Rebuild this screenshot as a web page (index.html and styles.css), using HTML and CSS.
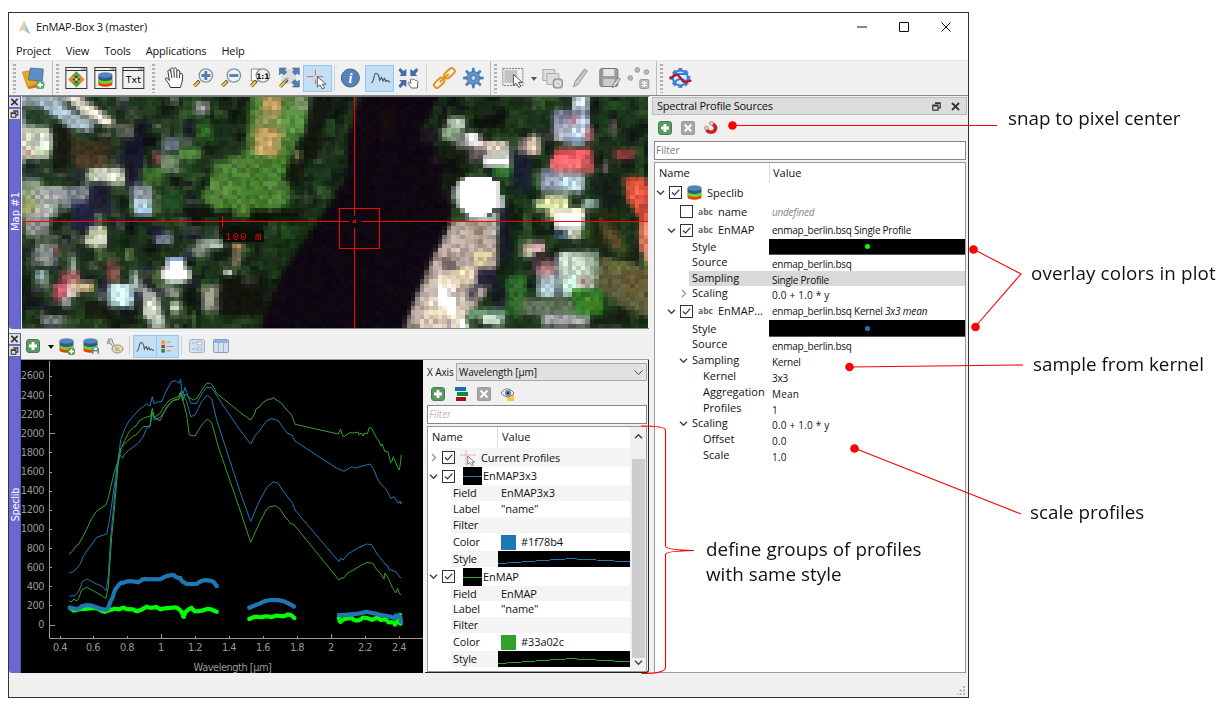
FILE: index.html
```html
<!DOCTYPE html>
<html lang="en">
<head>
<meta charset="utf-8">
<title>EnMAP-Box 3 (master)</title>
<link rel="stylesheet" href="styles.css">
</head>
<body>
<svg class="defs" width="0" height="0">
  <defs><linearGradient id="prism" x1="0" x2="1"><stop offset="0" stop-color="#e77"/><stop offset=".35" stop-color="#f5c95c"/><stop offset=".6" stop-color="#7cc7e8"/><stop offset="1" stop-color="#8266c8"/></linearGradient></defs>
  <symbol id="plus" viewBox="0 0 14 14"><rect x=".5" y=".5" width="13" height="13" rx="2.500" fill="#5c9861" stroke="#468049"/><path d="M7 3v8M3 7h8" stroke="#fff" stroke-width="2.800"/></symbol>
  <symbol id="cross" viewBox="0 0 14 14"><rect x=".5" y=".5" width="13" height="13" rx="1" fill="#a6a6a6" stroke="#999"/><path d="M3.500 3.500l7 7M10.500 3.500l-7 7" stroke="#fff" stroke-width="2"/></symbol>
  <symbol id="check" viewBox="0 0 13 13"><rect x=".5" y=".5" width="12" height="12" fill="#fff" stroke="#333"/><path d="M3 6.500l2.500 2.500 4.800-5.300" fill="none" stroke="#333" stroke-width="1.200"/></symbol>
  <symbol id="box" viewBox="0 0 13 13"><rect x=".5" y=".5" width="12" height="12" fill="#fff" stroke="#333"/></symbol>
  <symbol id="down" viewBox="0 0 9 9"><path d="M1 2.800l3.500 3.500L8 2.800" fill="none" stroke="#444" stroke-width="1.500"/></symbol>
  <symbol id="right" viewBox="0 0 9 9"><path d="M3 1l3.500 3.500L3 8" fill="none" stroke="#999" stroke-width="1.400"/></symbol>
  <symbol id="db" viewBox="0 0 15 15"><path d="M.5 8v4c0 3.600 14 3.600 14 0V8z" fill="#f23b0c"/><path d="M.5 6v3.500c0 3.300 14 3.300 14 0V6z" fill="#6ed41c"/><path d="M.5 3v3.500c0 3.300 14 3.300 14 0V3z" fill="#2e5b8e"/><ellipse cx="7.500" cy="3" rx="7" ry="2.700" fill="#5585bc"/></symbol>
  <symbol id="curve" viewBox="0 0 24 24"><path d="M2.500 17.500c3 0 2.500-10 4.800-10s2 1.500 3 2.500l1 5 2-3 1.500 3.500 1.500-2.500 1.500 3 1.500-1 3 2" fill="none" stroke="#4c5255" stroke-width="1.200"/></symbol>
  <symbol id="arrow" viewBox="0 0 12 15"><path d="M1 1v11l2.700-2.300L6.500 14l2-1.200L6.200 9h4z" fill="#fff" stroke="#555"/></symbol>
  <symbol id="floatwin" viewBox="0 0 9 9"><path d="M3 .8h5.200v5H6M.8 3h5.200v5.200H.8zM.8 4h5M3 1.500h5" fill="none" stroke="#333" stroke-width="1.200"/></symbol>
  <symbol id="close" viewBox="0 0 9 9"><path d="M1 1l7 7M8 1L1 8" stroke="#333" stroke-width="1.800"/></symbol>
  <symbol id="lens" viewBox="0 0 24 24"><path d="M3 20l5-5" stroke="#333" stroke-width="3.500"/><path d="M2.500 20.500l5-5" stroke="#f5c938" stroke-width="2.300"/><circle cx="14.500" cy="9.500" r="6.700" fill="#edf1f2" stroke="#8b9193" stroke-width="1.300"/></symbol>
  <symbol id="winframe" viewBox="0 0 24 24"><rect x="1.500" y="1.500" width="21" height="21" fill="#f1f1ef" stroke="#333"/><path d="M1.500 4.500h21M17 3h1m1 0h2" stroke="#333"/></symbol>
</svg>

<div class="window">
  <header class="titlebar">
    <svg class="logo" viewBox="0 0 14 16"><path d="M6 1L1 13c2-2 4-3 6-1l5 3z" fill="url(#prism)" opacity=".75"/></svg>
    <span>EnMAP-Box 3 (master)</span>
    <svg class="sysbuttons" viewBox="0 0 100 12"><path d="M0 6h10M42.500 1.500h9v9h-9zM84.500 1.500l9 9M93.500 1.500l-9 9" fill="none" stroke="#111"/></svg>
  </header>
  <nav class="menubar"><span>Project</span><span>View</span><span>Tools</span><span>Applications</span><span>Help</span></nav>

  <div class="toolbar">
    <div class="group g1"><i class="grip"></i>
      <svg viewBox="0 0 24 24"><path d="M4 15l13-3 2 9-12 2z" fill="#d9682c"/><path d="M1 6l11-2 4 14-10 3z" fill="#e8a91d" stroke="#c98616" stroke-width=".7"/><path d="M9 2l13 1-1 12-14-1z" fill="#5e8ec4" stroke="#41658d" stroke-width=".7"/><rect x="14.500" y="15" width="8.500" height="8" rx="2.500" fill="#69a66c"/><path d="M18.800 16.500v5M16.300 19h5" stroke="#fff" stroke-width="1.800"/></svg>
    </div>
    <div class="group g2"><i class="grip"></i>
      <svg viewBox="0 0 24 24"><use href="#winframe"/><path d="M12 5.500l8 8-8 8-8-8z" fill="#53a33b"/><path d="M12 5.500l4 4-4 4-4 4-4-4zM12 13.500l4 4 4-4-4-4z" fill="#e58b35"/><path d="M12 5.500l4 4-4 4-4-4z" fill="#53a33b"/><path d="M12 10v7M8.500 13.500h7" stroke="#24402a" stroke-width="1.500"/><circle cx="12" cy="13.500" r="1.300" fill="#eee"/></svg>
      <svg viewBox="0 0 24 24"><use href="#winframe"/><use href="#db" x="4" y="6" width="16" height="15"/></svg>
      <svg viewBox="0 0 24 24"><use href="#winframe"/><text x="12" y="17" text-anchor="middle" class="txt">Txt</text></svg>
    </div>
    <div class="group g3"><i class="grip"></i>
      <svg viewBox="0 0 24 24"><path d="M8 21.500c-1-4-4-6-5-9 1-1.500 3 0 4 2L5.500 5c1-2 2.500-1 3 1l-.3-3c1-2 2.800-1 3.300.500V3c1-2 2.800-1 3 1v1c1-1.500 3-1 3 1v2c1-1 2.700-.5 2.700 1 .5 6-1.200 9-2.200 12.500z" fill="#fff" stroke="#333"/><path d="M8.500 6l1 6M11.500 4l.5 7.500M14.500 5v7M17.500 8l-.5 4" stroke="#333"/></svg>
      <svg viewBox="0 0 24 24"><use href="#lens"/><path d="M14.500 5v9M10 9.500h9" stroke="#4c7db5" stroke-width="2.800"/></svg>
      <svg viewBox="0 0 24 24"><use href="#lens"/><path d="M10 9.500h9" stroke="#4c7db5" stroke-width="2.800"/></svg>
      <svg viewBox="0 0 24 24"><path d="M3 3h10v12H3z" fill="#fff" stroke="#888"/><use href="#lens"/><text x="14.500" y="12.500" text-anchor="middle" class="one">1:1</text></svg>
      <svg viewBox="0 0 24 24"><path d="M4 3h15v15H4z" fill="#ddd"/><path d="M2 2h7L7.200 3.800l2.300 2.300-2.900 2.900-2.300-2.300L2 9zM22 2v7l-2-2-2 2-3-3 2-2-2-2zM22 21h-7l2-2-2.500-2.500 3-3L20 16l2-2z" fill="#5080b4" stroke="#315b87" stroke-width=".5"/><path d="M3 20.500l7-7" stroke="#333" stroke-width="3.200"/><path d="M2.500 21l5-5" stroke="#f5c938" stroke-width="2.300"/><path d="M7 16l4-4" stroke="#aaa" stroke-width="2"/></svg>
      <svg class="on" viewBox="0 0 28 26"><path d="M12 4v6M12 14v5M3 11h7M14 11h6" stroke="#e35b60"/><use href="#arrow" x="13" y="10" width="12" height="15"/></svg>
      <i class="line"></i>
      <svg viewBox="0 0 24 24"><circle cx="12" cy="12" r="9" fill="#5582b8" stroke="#3c638e"/><text x="12" y="17" text-anchor="middle" class="info">i</text></svg>
      <svg class="on" viewBox="0 0 28 26"><use href="#curve" x="3" y="0" width="24" height="24"/></svg>
      <svg viewBox="0 0 24 24"><path d="M2 4l2-2 3 3 3-2v7H3l2-2zM22 4l-2-2-3 3-3-2v7h7l-2-2zM2 20l2 2 3-3 3 2v-7H3l2 2z" fill="#436e9f"/><path d="M15 22l-3.500-5c1-1.500 2-.5 3 .500l-.5-4c1-1.500 2 0 2.500.5 1-1 2-.5 2.500.5 1.500-.5 2.500.5 2.500 2L21 22z" fill="#fff" stroke="#555" stroke-width=".9"/></svg>
      <i class="line wide"></i>
      <svg viewBox="0 0 24 24"><g transform="rotate(-43 12 12)" fill="none" stroke="#e3931d" stroke-width="2"><rect x="-1" y="9" width="12" height="6" rx="3"/><rect x="13" y="9" width="12" height="6" rx="3"/><path d="M6 12h12"/></g></svg>
      <svg viewBox="0 0 24 24"><g stroke="#4f81b7" stroke-width="3" stroke-linecap="round"><path d="M12 3v18M3 12h18M5.500 5.500l13 13M5.500 18.500l13-13"/></g><circle cx="12" cy="12" r="6.500" fill="#6492c5" stroke="#4677ad"/><circle cx="12" cy="12" r="2.500" fill="#bdd4ee" stroke="#4677ad"/></svg>
    </div>
    <div class="group g4"><i class="grip"></i>
      <svg viewBox="0 0 24 24"><rect x="1.500" y="2.500" width="20" height="17" fill="none" stroke="#777" stroke-dasharray="2 1"/><path d="M3 4h13v13H3z" fill="#c3c3c3"/><use href="#arrow" x="11" y="7" width="12" height="16"/></svg>
      <b class="tri"></b>
      <svg viewBox="0 0 24 24"><path d="M2.500 3.500h12v11h-12z" fill="#ddd" stroke="#aaa"/><path d="M6.500 7.500h12v11h-12z" fill="#ddd" stroke="#aaa"/><rect x="13" y="13" width="9" height="9" rx="2" fill="#bbb" stroke="#888"/><circle cx="17.500" cy="17.500" r="2.700" fill="none" stroke="#fff"/><path d="M15.500 19.500l4-4" stroke="#fff"/></svg>
      <svg viewBox="0 0 24 24"><path d="M5 21l2-6L16 3l3 2-9 13z" fill="#cfcfcf" stroke="#999"/><path d="M8 15l9-11" stroke="#aaa"/></svg>
      <svg viewBox="0 0 24 24"><rect x="2.500" y="2.500" width="18" height="18" rx="2" fill="#9d9d9d" stroke="#777"/><path d="M6 3h11v7H6z" fill="#e5e5e5"/><path d="M6 13h11v7H6z" fill="#ccc"/><path d="M15 22l1-4 5-6 2 1-5 7z" fill="#ddd" stroke="#888"/></svg>
      <svg viewBox="0 0 24 24"><g fill="#b9b9b9" stroke="#999"><circle cx="4" cy="12" r="2.300"/><circle cx="11" cy="4" r="2.300"/><circle cx="20" cy="6" r="2.300"/><rect x="13.500" y="13.500" width="9" height="9" rx="1.500"/></g><path d="M18 15v6M15.500 16.500l5 3M20.500 16.500l-5 3" stroke="#fff" stroke-width="1.300"/></svg>
    </div>
    <div class="group g5"><i class="grip"></i>
      <svg viewBox="0 0 24 24"><g stroke="#758089" stroke-width="4"><path d="M12 2v20M2 12h20M5 5l14 14M5 19L19 5"/></g><circle cx="12" cy="12" r="7.500" fill="#dbe9fb" stroke="#2780ed" stroke-width="2"/><path d="M6 17c3-5 8-5 12-1M6 8h12" fill="none" stroke="#2780ed" stroke-width="2"/><path d="M1 12c5 0 5-4 8-3s4 6 7 7 3-2 7-1" fill="none" stroke="#c0141c" stroke-width="2.300"/></svg>
    </div>
  </div>

  <main class="workspace">
    <div class="docks">
      <section class="dock mapdock">
        <div class="tab"><svg><use href="#close"/></svg><svg><use href="#floatwin"/></svg><span class="vlabel">Map #1</span></div>
        <div class="map">
          <canvas id="raster" width="140" height="52"></canvas>
          <svg class="over" viewBox="22 97 626 231"><rect x="223" y="230" width="41" height="12" fill="#071006"/><path d="M22 221.500h327M361 221.500h287M354.500 97v118.500M354.500 228v100M222.500 216v11M339.500 208.500h40v40h-40zM353.500 220.500h2v2h-2z" class="cross"/><text x="225" y="239.500" class="scale">100 m</text></svg>
        </div>
      </section>
      <section class="dock libdock">
        <div class="tab"><svg><use href="#close"/></svg><svg><use href="#floatwin"/></svg><span class="vlabel lib">Speclib</span></div>
        <div class="libmain">
          <div class="libbar">
            <svg class="i14"><use href="#plus"/></svg><b class="tri black"></b>
            <svg viewBox="0 0 18 18"><use href="#db" width="15" height="15" x="1" y="1"/><rect x="10" y="11" width="7" height="7" rx="2" fill="#5c9861"/><path d="M13.500 12v5M11 14.500h5" stroke="#fff" stroke-width="1.500"/></svg>
            <svg viewBox="0 0 18 18"><use href="#db" width="15" height="15" x="1" y="1"/><path d="M10 11h7v6h-7z" fill="#6e86a8"/><path d="M12 11h3v2h-3zM11.500 14.500h4V17h-4z" fill="#eee"/></svg>
            <svg class="wrench" viewBox="0 0 18 18"><path d="M2 2l4 0 1 4 6 6-2 3-6-8-4-1 1-2 2 1z" fill="#ddd" stroke="#777" stroke-width=".8"/><ellipse cx="11.500" cy="12" rx="5.500" ry="4" fill="#ddd" stroke="#888"/><circle cx="11" cy="12" r="2" fill="#8aa4c0"/><path d="M8 8l7 7.500" stroke="#e8c14c" stroke-width="2"/></svg>
            <i class="line"></i>
            <div class="pair"><svg viewBox="0 0 24 24"><use href="#curve"/></svg><svg viewBox="0 0 24 24"><path d="M5 5h4v4H5z" fill="#e6a400"/><path d="M5 10h4v4H5z" fill="#d82b20"/><path d="M5 15h4v4H5z" fill="#12933d"/><path d="M11 7h4M11 12h8M11 17h5" stroke="#d47b45"/></svg></div>
            <i class="line"></i>
            <svg class="form" viewBox="0 0 16 16"><rect x=".5" y="1.500" width="15" height="13" rx="2" fill="#d5e0ec" stroke="#9db4ce"/><path d="M3 5h3M3 11h3M8 4h5v3H8zM8 10h5v2H8z" fill="#fff" stroke="#9db4ce"/></svg>
            <svg class="form" viewBox="0 0 16 16"><rect x=".5" y="1.500" width="15" height="13" rx="1" fill="#d5e0ec" stroke="#7ea3cb"/><path d="M1 2h14v3H1z" fill="#8fb5de"/><path d="M5.500 5v9M10.500 5v9" stroke="#9db4ce"/></svg>
          </div>
          <div class="libbody">
            <svg class="plot" viewBox="21 360 402 313">
              <path d="M49.500 361v277.500H423" fill="none" stroke="#999"/>
              <g id="ticks" class="ticks"></g>
              <text x="232.500" y="671" text-anchor="middle" class="axis">Wavelength [µm]</text>
              <g id="profiles" class="profiles"></g>
              <g id="dots" class="dots" transform="translate(0 510) scale(.33333)"></g>
            </svg>
            <aside class="panel">
              <div class="xaxis"><label>X Axis</label><div class="select"><span>Wavelength [µm]</span><svg viewBox="0 0 9 9"><path d="M.5 2.500l4 4 4-4" fill="none" stroke="#444"/></svg></div></div>
              <div class="ptools"><svg class="i14"><use href="#plus"/></svg><svg class="i14" viewBox="0 0 14 14"><path d="M1 0h11v4H1z" fill="#1671b8"/><path d="M3 5h11v4H3z" fill="#0a8a43"/><path d="M2 10h10v4H2z" fill="#a51212"/></svg><svg class="i14"><use href="#cross"/></svg><svg class="eye" viewBox="0 0 16 14"><path d="M7 7h7v7H7z" fill="#f5cb3d"/><path d="M1 6c4-6 9-5 13 0-4 5-9 5-13 0z" fill="#eee" stroke="#777"/><circle cx="8" cy="6" r="3" fill="#5484b5"/><circle cx="8" cy="6" r="1" fill="#123"/></svg></div>
              <div class="filter ghost">Filter</div>
              <div class="ptree">
                <div class="prows">
                  <div class="phead"><span>Name</span><span>Value</span></div>
                  <div class="prow top h19 grey"><svg class="chev"><use href="#right"/></svg><svg class="cb"><use href="#check"/></svg><svg class="cursor" viewBox="0 0 18 18"><path d="M7 1v16M1 6h16" stroke="#eeb0ad"/><use href="#arrow" x="8" y="6" width="9" height="12"/></svg><span>Current Profiles</span></div>
                  <div class="prow top"><svg class="chev"><use href="#down"/></svg><svg class="cb"><use href="#check"/></svg><i class="sample blue"></i><span>EnMAP3x3</span></div>
                  <div class="prow sub h16 grey"><span>Field</span><span>EnMAP3x3</span></div>
                  <div class="prow sub h16"><span>Label</span><span>"name"</span></div>
                  <div class="prow sub h16 grey"><span>Filter</span></div>
                  <div class="prow sub"><span>Color</span><span class="color"><i class="sw blue"></i>#1f78b4</span></div>
                  <div class="prow sub h16 grey style"><span>Style</span><svg viewBox="0 0 132 16"><path d="M0 12.500h8l2-1h13l1-1h13l1-1h13l2-1h14l1-1h10l2 1h18l1 1h17l1 1h15" fill="none" stroke="#1f78b4"/></svg></div>
                  <div class="prow top h19"><svg class="chev"><use href="#down"/></svg><svg class="cb"><use href="#check"/></svg><i class="sample green"></i><span>EnMAP</span></div>
                  <div class="prow sub h15 grey"><span>Field</span><span>EnMAP</span></div>
                  <div class="prow sub h16"><span>Label</span><span>"name"</span></div>
                  <div class="prow sub h16 grey"><span>Filter</span></div>
                  <div class="prow sub"><span>Color</span><span class="color"><i class="sw green"></i>#33a02c</span></div>
                  <div class="prow sub h16 grey style"><span>Style</span><svg viewBox="0 0 132 16"><path d="M0 12.500h8l2-1h13l1-1h13l1-1h13l2-1h14l1-1h10l2 1h18l1 1h17l1 1h15" fill="none" stroke="#33a02c"/></svg></div>
                </div>
                <div class="scroll"><svg viewBox="0 0 9 9"><path d="M1 6.300l3.500-3.500L8 6.300" fill="none" stroke="#444" stroke-width="1.500"/></svg><i></i><svg><use href="#down"/></svg></div>
              </div>
            </aside>
          </div>
        </div>
      </section>
    </div>

    <section class="sources">
      <div class="srchead"><span>Spectral Profile Sources</span><svg><use href="#floatwin"/></svg><svg><use href="#close"/></svg></div>
      <div class="srctools"><svg class="i14"><use href="#plus"/></svg><svg class="i14"><use href="#cross"/></svg><svg class="i14" viewBox="0 0 14 14"><path d="M2.500 7.500c1 5 8 5 9 0C12 5 10 4 8 2.500" fill="none" stroke="#c91f25" stroke-width="3.600"/><circle cx="2.500" cy="7" r="1.900" fill="#ddd" stroke="#b88"/><circle cx="7.500" cy="2.300" r="1.900" fill="#ddd" stroke="#b88"/></svg></div>
      <div class="filter">Filter</div>
      <div class="stree">
        <div class="shead"><span>Name</span><span>Value</span></div>
        <div class="srow l0 h19"><span><svg class="chev"><use href="#down"/></svg><svg class="cb"><use href="#check"/></svg><svg class="i15"><use href="#db"/></svg>Speclib</span></div>
        <div class="srow l1 h19"><span><i class="chev"></i><svg class="cb"><use href="#box"/></svg><b>abc</b>name</span><em class="dim">undefined</em></div>
        <div class="srow l1 h18"><span><svg class="chev"><use href="#down"/></svg><svg class="cb"><use href="#check"/></svg><b>abc</b>EnMAP</span><span>enmap_berlin.bsq Single Profile</span></div>
        <div class="srow l2 h16"><span>Style</span><span class="bar"><i class="lime"></i></span></div>
        <div class="srow l2 h16 low"><span>Source</span><span>enmap_berlin.bsq</span></div>
        <div class="srow l2 h15 low sel"><span>Sampling</span><span>Single Profile</span></div>
        <div class="srow l2 h16 low"><span><svg class="chev"><use href="#right"/></svg>Scaling</span><span class="num">0.0 + 1.0 * y</span></div>
        <div class="srow l1 h18"><span><svg class="chev"><use href="#down"/></svg><svg class="cb"><use href="#check"/></svg><b>abc</b>EnMAP...</span><span>enmap_berlin.bsq Kernel <em>3x3 mean</em></span></div>
        <div class="srow l2 h17"><span>Style</span><span class="bar"><i class="blue"></i></span></div>
        <div class="srow l2 h16 low"><span>Source</span><span>enmap_berlin.bsq</span></div>
        <div class="srow l2 h16 low"><span><svg class="chev"><use href="#down"/></svg>Sampling</span><span>Kernel</span></div>
        <div class="srow l3 h16 low"><span>Kernel</span><span>3x3</span></div>
        <div class="srow l3 h16 low"><span>Aggregation</span><span class="num">Mean</span></div>
        <div class="srow l3 h15 low"><span>Profiles</span><span>1</span></div>
        <div class="srow l2 h16 low"><span><svg class="chev"><use href="#down"/></svg>Scaling</span><span class="num">0.0 + 1.0 * y</span></div>
        <div class="srow l3 h16 low"><span>Offset</span><span class="num">0.0</span></div>
        <div class="srow l3 h16 low"><span>Scale</span><span class="num">1.0</span></div>
      </div>
    </section>
  </main>
  <footer class="status"><svg viewBox="0 0 10 10"><path d="M8 0v2M8 4v2M8 8v2M4 4v2M4 8v2M0 8v2" stroke="#aaa" stroke-width="2"/></svg></footer>
</div>

<svg class="callouts" viewBox="0 0 1221 714">
  <g fill="none" stroke="#f00" stroke-width="1.100"><path d="M732 125.500h265M973 249l48 25-46 53M849 367l174-2M854 448l167 66"/><path d="M641 426q24 0 24.500 4v116q0 4 28.500 4.500-28.500 .5-28.500 4v113q0 6-24 6"/></g>
  <g fill="#f00"><circle cx="732.500" cy="125.500" r="4.300"/><circle cx="973.500" cy="249.500" r="4.300"/><circle cx="975.500" cy="327" r="4.300"/><circle cx="849.500" cy="367" r="4.300"/><circle cx="854.500" cy="448.500" r="4.300"/></g>
</svg>
<p class="note n1">snap to pixel center</p>
<p class="note n2">overlay colors in plot</p>
<p class="note n3">sample from kernel</p>
<p class="note n4">scale profiles</p>
<p class="note n5">define groups of profiles<br>with same style</p>
<script src="script.js"></script>
</body>
</html>
```
FILE: styles.css
```css
* { box-sizing: border-box; }
body { margin: 0; width: 1221px; height: 714px; overflow: hidden; position: relative; background: #fff; padding: 12px 0 0 8px; font: 11px/16px "Open Sans", "Noto Sans", sans-serif; color: #111; }
svg { display: block; flex: none; }
i, b, em { flex: none; }
.defs { position: absolute; }
.window { width: 961px; height: 686px; border: 1px solid #333; background: #f0f0f0; display: flex; flex-direction: column; }
.titlebar { height: 27px; background: #fff; display: flex; align-items: center; padding: 0 12px 0 9px; letter-spacing: -.15px; }
.logo { width: 14px; height: 16px; margin-right: 4px; }
.sysbuttons { width: 100px; height: 12px; margin-left: auto; margin-right: -1px; }
.menubar { height: 20px; background: #fff; display: flex; padding: 3px 0 0 7px; gap: 15px; letter-spacing: -.16px; }
.toolbar { height: 36px; display: flex; border-top: 1px solid #e5e5e5; border-bottom: 1px solid #888; }
.group { display: flex; align-items: center; border-right: 1px solid #bbb; flex: none; }
.group > svg { width: 28.700px; height: 24px; }
.group > svg.on { height: 27px; background: #c2dff5; border: 1px solid #90c8f6; }
.g1 { width: 44px; } .g2 { width: 98px; border: 0; } .g3 { width: 340px; } .g4 { width: 166px; } .g5 { border: 0; }
.grip { width: 3px; height: 29px; margin: 0 3px 0 3px; background: repeating-linear-gradient(#b0b0b0 0 2px, transparent 2px 4px); }
.g1 .grip { margin: 0 3px 0 4px; }
.g3 .grip { margin: 0 5px 0 1px; }
.g4 .grip { margin: 0 2px 0 3px; }
.line { width: 1px; height: 26px; background: #d0d0d0; margin: 0 1.500px; }
.line.wide { margin: 0 3.500px; }
.txt { font: 9.500px "DejaVu Sans", sans-serif; }
.one { font: bold 7.500px "DejaVu Sans", sans-serif; }
.info { font: italic bold 14px "Liberation Serif", serif; fill: #fff; }
.tri { width: 0; border: 3.500px solid transparent; border-top: 4px solid #555; border-bottom: 0; margin: 2px 1px 0 3px; }
.workspace { display: flex; flex: 1; min-height: 0; }
.docks { width: 641px; display: flex; flex-direction: column; }
.dock { display: flex; }
.mapdock { height: 233px; }
.tab { width: 12px; background: #6868d0; border-right: 1px solid #5555ae; display: flex; flex-direction: column; align-items: center; gap: 2px; border-radius: 0 0 0 3px; padding-top: 1px; }
.tab svg { width: 11px; height: 10px; padding: 1px; background: #ddd; }
.vlabel { writing-mode: vertical-rl; transform: rotate(180deg); color: #fff; font: 10px/12px "DejaVu Sans", sans-serif; width: 12px; margin: 71px 0 0 3px; letter-spacing: 0; }
.vlabel.lib { margin-top: 130px; letter-spacing: -.4px; }
.map { width: 627px; height: 233px; position: relative; border-top: 1px solid #777; border-bottom: 1px solid #888; margin-left: 1px; }
#raster { width: 626px; height: 231px; display: block; image-rendering: pixelated; }
.over { position: absolute; inset: 0; width: 626px; height: 231px; }
.cross { fill: none; stroke: #f00; stroke-width: 1; shape-rendering: crispEdges; }
.scale { font: 11px "Liberation Mono", monospace; fill: #e00; letter-spacing: .9px; }
.libdock { height: 340px; margin-top: 4px; }
.libmain { width: 628px; display: flex; flex-direction: column; }
.libbar { height: 27px; border-top: 1px solid #fafafa; border-bottom: 1px solid #999; display: flex; align-items: center; padding: 0 0 1px 5px; }
.i14 { width: 14px; height: 14px; }
.i15 { width: 15px; height: 15px; }
.tri.black { border-top-color: #111; margin: 2px 4px 0 8px; }
.libbar > svg:not(.i14) { width: 18px; height: 18px; margin-right: 6px; }
.libbar .line { height: 20px; margin: 0 3px 0 -1px; }
.pair { display: flex; background: #c2dff5; border: 1px solid #90c8f6; height: 23px; margin-right: 3px; }
.pair svg { width: 22px; height: 21px; }
.pair svg + svg { border-left: 1px solid #90c8f6; }
.libbar > svg.form { width: 16px; height: 16px; margin: 0 4px; }
.libbody { display: flex; }
.plot { width: 402px; height: 313px; background: #000; }
.ticks path { stroke: #999; }
.ticks text, .axis { font: 9.800px "DejaVu Sans", "Open Sans", sans-serif; fill: #999; letter-spacing: -.45px; }
.profiles polyline { fill: none; stroke-width: 1; stroke-linejoin: round; }
.dots polyline { fill: none; stroke-width: 13.500; stroke-linecap: round; stroke-linejoin: round; stroke-dasharray: 0 7.500; }
.green { stroke: #33a02c; } .blue { stroke: #1f78b4; } .lime { stroke: #0f0; }
.panel { width: 224px; margin-left: 2px; height: 313px; border-right: 1px solid #222; border-bottom: 1px solid #222; padding: 3px 1px 0 2px; border-radius: 0 0 3px 0; }
.xaxis { display: flex; height: 18px; align-items: center; font-size: 10px; }
.xaxis label { width: 29px; white-space: nowrap; letter-spacing: -.1px; }
.select { flex: 1; height: 18px; border: 1px solid #aaa; background: #e1e1e1; display: flex; align-items: center; justify-content: space-between; padding: 0 3px 0 2px; letter-spacing: -.1px; }
.select svg { width: 9px; height: 9px; }
.ptools { height: 24px; display: flex; gap: 9px; padding: 1px 0 0 4px; align-items: center; }
.eye { width: 16px; height: 14px; }
.filter { height: 19px; border: 1px solid #888; background: #fff; color: #777; font-size: 10px; line-height: 16px; padding-left: 1px; }
.ghost { font-style: italic; color: #bbb; font-size: 10px; }
.ptree { margin-top: 2px; height: 246px; border: 1px solid #999; background: #fff; display: flex; }
.prows { width: 202px; }
.phead { height: 21px; display: grid; grid-template-columns: 69px 1fr; line-height: 20px; }
.phead span { padding-left: 4px; }
.phead span + span { border-left: 1px solid #ddd; }
.prow { height: 18px; display: flex; align-items: center; background: #fff; white-space: nowrap; letter-spacing: -.1px; }
.prow.h19, .srow.h19 { height: 19px; } .prow.h16, .srow.h16 { height: 16px; } .prow.h15, .srow.h15 { height: 15px; } .srow.h18 { height: 18px; } .srow.h17 { height: 17px; }
.chev { width: 9px; height: 9px; }
.cb { width: 13px; height: 13px; }
.prow.top { padding-left: 1px; }
.prow.top .cb { margin-left: 4px; }
.prow.top.grey { background: linear-gradient(90deg, #fff 14px, #f4f4f4 14px); }
.cursor { width: 18px; height: 18px; margin: 0 4px 0 4px; }
.sample { width: 19px; height: 18px; background: #000; margin: 0 1px 0 8px; padding-top: 9px; }
.sample::after { content: ""; display: block; height: 1px; background: #1f78b4; }
.sample.green::after { background: #33a02c; }
.prow.sub { display: grid; grid-template-columns: 45px 1fr; margin-left: 23px; padding-left: 2px; }
.prow.grey.sub { background: #f4f4f4; }
.prow.sub > span + span { padding-left: 3px; }
.color { display: flex; align-items: center; }
.sw { width: 15px; height: 15px; margin-right: 5px; }
.sw.blue { background: #1f78b4; } .sw.green { background: #33a02c; }
.prow.style svg { width: 132px; height: 16px; background: #000; }
.scroll { width: 16px; background: #f0f0f0; display: flex; flex-direction: column; align-items: center; justify-content: space-between; padding: 5px 1px 4px; }
.scroll svg { width: 9px; height: 9px; }
.scroll i { width: 13px; height: 199px; background: #cdcdcd; margin-top: 17px; }
.sources { width: 316px; margin-left: 4px; display: flex; flex-direction: column; height: 577px; padding-right: 2px; }
.srchead { height: 18px; margin: 1px -1px 0 -1px; background: #dcdcdc; border: 1px solid #bbb; display: flex; align-items: center; padding: 0 6px 0 4px; gap: 10px; letter-spacing: -.22px; }
.srchead span { flex: 1; }
.srchead svg { width: 9px; height: 9px; }
.srctools { height: 25px; display: flex; align-items: center; gap: 9px; padding: 1px 0 0 5px; }
.sources .filter { margin: 1px 0 0 1px; width: 312px; }
.stree { margin: 2px 0 0 1px; width: 312px; flex: 1; border: 1px solid #999; background: #fff; }
.shead, .srow { display: grid; grid-template-columns: 114px 1fr; align-items: center; white-space: nowrap; }
.shead { height: 20px; }
.shead span { padding-left: 4px; line-height: 20px; }
.shead span + span { border-left: 1px solid #ddd; padding-left: 3px; }
.srow > span:first-child { display: flex; align-items: center; padding-left: 1px; }
.srow > :nth-child(2) { font-size: 10px; padding-left: 3px; letter-spacing: -.25px; }
.srow em { font-size: 10px; letter-spacing: -.15px; }
.srow.low > span:first-child { margin-top: -2px; line-height: 14px; }
.srow.low > span:nth-child(2) { padding-top: 3px; line-height: 13px; }
.srow > .num:nth-child(2) { letter-spacing: .2px; }
.srow .cb { margin: 0 5px 0 4px; }
.srow .i15 { margin-right: 5px; }
.srow b { font: bold 8.500px/12px "Open Sans", sans-serif; color: #666; width: 20px; }
.l1 .chev { margin-left: 11px; width: 9px; }
.srow.l2 > span:first-child { padding-left: 37px; }
.l2 .chev { margin: 0 4px 0 -13px; }
.srow.l3 > span:first-child { padding-left: 48px; }
.dim { color: #888; }
.srow > .bar:nth-child(2) { height: 100%; background: #000; display: flex; align-items: center; justify-content: center; border-bottom: 1px solid #555; padding: 0; }
.bar i { width: 5px; height: 5px; border-radius: 50%; background: #0f0; }
.bar i.blue { background: #1f78b4; }
.sel { background: linear-gradient(90deg, #fff 34px, #d9d9d9 34px); }
.status { height: 24px; flex: none; display: flex; justify-content: flex-end; align-items: flex-end; padding: 2px; }
.status svg { width: 9px; height: 9px; }
.callouts { position: absolute; left: 0; top: 0; width: 1221px; height: 714px; }
.note { position: absolute; margin: 0; font-size: 18.800px; line-height: 25px; white-space: nowrap; }
.n1 { left: 1008px; top: 106px; } .n2 { left: 1031px; top: 261px; letter-spacing: .15px; } .n3 { left: 1033px; top: 352px; } .n4 { left: 1030px; top: 500px; } .n5 { left: 706px; top: 537px; letter-spacing: .05px; }
```
FILE: script.js
```javascript
// Axis ticks of the profile plot.
const ticks = [];
for (let v = 0; v <= 2600; v += 200) {
  const y = 624.5 - v * 0.0956, w = v % 2000 ? 2 : 5;
  ticks.push(`<path d="M${50} ${Math.round(y) + .5}h${w}"/><text x="44" y="${y + 3.5}" text-anchor="end">${v}</text>`);
}
for (let i = 2; i <= 12; i++) {
  const x = Math.round(59.5 + (i - 2) * 33.95) + .5;
  ticks.push(`<path d="M${x} 638v-${i % 5 ? 2 : 4}"/><text x="${x - .5}" y="650.5" text-anchor="middle">${i / 5}</text>`);
}
document.getElementById('ticks').innerHTML = ticks.join('');

// Profile curves.
const curves = [
  ['green', '69,554 72,551.7 76,546 78.7,544.3 82,538 86.7,529.3 91.7,518.3 96.7,511 105.7,505 108.3,498.3 111,486 114,473.3 118.3,460 121.7,446.7 125,440 128.3,433.3 130,431 133.3,427.3 136,426 139,421 143.3,418.3 147,417 150.7,416 152.3,408.3 154.3,417.3 158,415 160,413.3 163,408 166.7,403.3 170,400 173.3,398.3 178.3,396.700 180.7,391.7 182.500,401 185,394 188.3,396.7 193.3,400 197,398 200,393.3 203,388 206.7,383.3 210.7,383.3 213,386 216.7,393.3 240,412.3 250.7,420 255,413 256,409 260,406.7 262,403 268.3,399.3 272,399 273.3,397.3 275,399 281.7,403.3 285,408 291.7,415 293,419 295,424.3 338.3,434 340.7,429.3 342,434 343.7,436.7 350,432.7 354,433 358,432 359,435 361,433 363,436 364,433 367.3,434 369.3,427.3 371.7,428.3 374,433 376.7,438.3 379,441 381,446 382,444 385,451.7 388,451.7 390.7,462.7 392,461 393.3,456.7 395,461 398,468 399.3,470 400,466 401.3,455'],
  ['blue', '69.3,572.7 73.3,571.7 77,568 80,564.3 83,557 87.3,550 92,544 96.7,537.3 106.7,534 108,528 110,516.7 113,495 116.7,470 120.7,440 125,428.3 129,421 133.3,416 140,409 146.7,404 150,406 152.3,396.7 154.3,404 157,402 161.7,401.7 166.7,390 171.7,381.7 176,380.7 179,383.3 180.7,379.3 181.500,389 183.3,393.3 185,387.3 188.3,396.7 190.7,403.3 196.7,403.3 200,397 203.3,391.7 206,387.5 211,387.5 213.3,390 221.7,403.3 240,430 250.7,444 255,436 260,430 266.7,420.7 271.7,418.7 278.3,420.7 286.7,432.7 291.7,435 295,441 336.7,468.3 344,471.3 351.7,466.7 355,468 360,466.7 370,464 373.3,468.3 378,480 381.7,485 386.7,490 390.7,498.3 394,496.7 398.3,503.3 400,501 400.5,504 401.7,501.7'],
  ['blue', '69.3,596 75,595.7 79,591 82.3,581.7 86.7,579 91,581 95,583.3 101.7,586 106,590.7 108.3,576.7 110.7,536.7 113.3,510 116.7,470 120,455 122.7,458.3 124,455 128.3,450.7 138.3,443.3 143,437 146.7,428.3 150,426.7 152.3,412.7 154.3,420 160,417.3 166.7,408.3 173.3,400.7 179,399.3 181.7,390.7 186.7,401.7 190.7,416.7 195,415 201.7,401.7 207.3,395 211.7,399 216.7,420 230,461 240,491.7 250.7,521.5 258.3,503.3 266.7,487.7 273.3,481.7 278.3,483.3 283,491 292.7,503.3 295,510 302.7,519.3 339,561.7 341,558 343,560 348,554 353.3,550.7 358,548 366.7,544 371.7,544.7 377,554 383.3,561.7 386,565 388,566 389,570 391.7,570 396,572 401,578.3'],
  ['green', '69.3,600.7 71,602 74,599 76,601 78.3,599.3 81.7,590 86.7,587.3 90,589 95,591.7 106,598.3 108.3,586.7 111.7,536.7 114.3,510 118.3,461.7 120.7,448.3 126.7,441.7 133.3,436 136,435 143.3,426.7 150,426 151.7,411.7 155,418 160,420.7 166.7,406.7 173.3,400 178.3,399.3 181.7,393.3 183.3,401.7 186.7,415 189.3,435 195,436 201.7,425 207.3,419 211.7,422.7 218.3,446.7 229,478 240,510 250.7,542.3 260,521.7 262.7,516.7 266,510 270,506.7 275,505.700 280,509 286,518.3 288,520 291,524 293.3,524 300,532 339,580 341,578 343.3,578.3 348,573 353.3,570 360,566 366.7,562.3 372.7,563.3 377,570 381.7,575 384,579 385,573 388.3,578.3 392,587 395.7,592.7 397.7,588.3 399,593 401,595']
];
document.getElementById('profiles').innerHTML = curves.map(([c, p]) => `<polyline class="${c}" points="${p}"/>`).join('');
const dots = [
  ['lime', '210,293 220,302 235,298 260,296 290,294 312,306 330,300 345,296 360,298 370,292 380,298 400,298 410,305 425,299 440,290 450,294 470,291 480,298 500,294 525,292 535,295 545,306 551,323 555,308 565,298 575,294 583,304 600,303 615,299 625,296 637,300 650,305'],
  ['lime', '748,327 765,320 785,322 800,318 815,321 830,317 850,319 865,313 875,316 884,325'],
  ['lime', '1017,325 1020,337 1030,328 1045,325 1055,324 1065,332 1080,330 1090,322 1105,325 1115,330 1130,323 1145,331 1155,325 1165,337 1180,337 1185,344 1195,330 1203,343'],
  ['lime', '1200,315 1200,343'],
  ['blue', '210,293 222,296 235,297 245,289 260,285 275,287 290,292 305,297 320,300 326,290 330,278 338,262 345,240 352,230 360,220 385,214 400,214 415,217 430,207 445,208 460,208 480,208 500,198 520,194 530,203 540,203 545,213 560,222 590,222 600,215 615,210 630,212 640,215 650,228'],
  ['blue', '748,293 765,286 780,280 795,273 810,270 835,270 850,273 865,280 880,288 884,293'],
  ['blue', '1017,315 1040,314 1060,312 1080,310 1100,305 1115,309 1130,312 1145,316 1160,318 1172,320 1185,325 1188,316 1200,318 1203,335']
];
document.getElementById('dots').innerHTML = dots.map(([c, p]) => `<polyline class="${c}" points="${p}"/>`).join('');

// Aerial raster: terrain patches painted at cell resolution, then given per-cell grain.
const cv = document.getElementById('raster'), ctx = cv.getContext('2d');
let seed = 7;
const rnd = () => (seed = (seed * 16807) % 2147483647) / 2147483647;
const S = 1 / 13.42;
ctx.setTransform(S, 0, 0, S, -66 * S, -21 * S);
ctx.fillStyle = '#1b2f1a';
ctx.fillRect(0, 0, 2000, 800);
function scatter(x, y, w, h, n, colors, max) {
  for (let i = 0; i < n; i++) {
    ctx.fillStyle = colors[Math.floor(rnd() * colors.length)];
    const s = 13.42 * (1 + Math.floor(rnd() * max));
    ctx.fillRect(x + rnd() * w, y + rnd() * h, s, 13.42 * (1 + Math.floor(rnd() * max)));
  }
}
function paint(list, dx) {
  for (const item of list.trim().split('\n')) {
    const [c, ...n] = item.trim().split(/[ ,]+/), p = n.map(Number);
    ctx.fillStyle = '#' + c;
    ctx.beginPath();
    if (p.length === 3) ctx.arc(p[0] + dx, p[1], p[2], 0, 7);
    else if (p.length === 4) ctx.rect(p[0] + dx, p[1], p[2], p[3]);
    else for (let i = 0; i < p.length; i += 2) ctx.lineTo(p[i] + dx, p[i + 1]);
    ctx.fill();
  }
}
const greens = ['#0c160e', '#1d3a1a', '#264a20', '#10200f', '#183317', '#305029', '#0d1210'];
scatter(60, 0, 1900, 720, 2300, greens, 3);
scatter(60, 10, 520, 700, 230, ['#15141f', '#1d1c30', '#5d6359', '#6c7568', '#3f4a3c', '#28283e', '#4e6b3b', '#0b0b12', '#2d4426'], 3);
paint(`
8f9fa0 66,250 66,21 200,21 190,60 110,60
a9bccb 90,21 140,21 280,100 270,125 210,115
27402a 66,45 130,55 170,100 80,100
eee9d8 195,21 240,21 300,60 350,100 330,112 260,80
a9b89c 66,110 85,100
e8efe0 115,125 40,60
cfd3bd 66,120 40,65
e9b9aa 66,185 40,12
14170e 160,115 50,130
39301d 215,150 120,50
4a3a24 225,195 100,40
15122a 370,150 60,70
1a1830 385,195 40,110
8ca07c 66,270 60,70
9aa35f 66,330 50,60
a9adab 110,290 80,50
7f868d 185,290 85,70
8b8f8a 75,370 75,70
b6bdb8 110,340 60,40
b7c7b0 260,240 110,40
f0f4e0 285,238 40,40
dfe2d2 330,240 40,40
1c1930 270,280 60,70
202040 215,335 70,90
8c93a0 395,285 60,60
c6e4ef 400,330 50,45
a5cbe6 415,350 35,25
6c7891 490,145 45,40
66333b 455,190 30,35
84a07e 480,200 50,45
4d7d3b 530,175 75,35
3c6e28 425,235 65,50
2f6b22 595,100 40,50
b8b7bb 585,40 40,30
c5c9aa 270,410 50,65
d6d9bf 250,435 70,30
7d8797 465,430 50,35
14172d 440,410 50,30
8e9590 110,460 55,70
a9c5ca 110,545 30,30
9a4a4d 160,480 20,14
a9b9a3 210,500 16,90
b25d62 180,550 60,30
e6636f 165,585 40,50
f3d4ca 200,585 30,40
dcc38f 230,580 50,30
6d3c35 320,515 35,60
8c5d4d 340,535 20,50
bfe0e6 325,585 75,70
d5f6fa 340,595 50,55
a8bfb0 395,550 20,55
b9c2b9 415,575 470,620 500,714 460,714 430,640
d8dccb 430,640 40,50
13190f 250,640 75,50
3b4041 90,590 50,25
8b8f92 185,620 30,35
777d7c 130,680 60,30
9a9d90 500,600 40,25
e7edd5 510,640 30,30
8a9980 640,410 15,60
9ea9a0 595,450 75,25
e2efe4 630,460 40,14
a0a3a0 580,480 40,20
c79a68 700,460 30,25
796c56 695,490 30,45
fbfff0 670,545 28,14
9a9c88 610,590 40,80
c05f50 655,590 16,16
10130b 660,560 140,120
34352b 728,560 42,27
44752f 750,21 940,21 915,120 860,210 835,350 770,385 690,375 600,330 650,240 730,190 740,120
3f7d24 810,210 870,200 830,340 770,370 740,280
5d8b3c 640,260 740,250 720,320 620,330
8a8e4d 690,210 50,60
83924f 760,70 100,80
b49758 785,21 60,50
c49f62 800,40 40,30
b99b59 760,115 80,80
cda968 785,150 45,50
579040 850,60 60,70
7e9a69 880,25 50,40
10160d 930,21 990,21 960,180 910,240 850,330 830,320 880,210 920,120
a99d66 888,185 14,28
0b150c 560,350 140,35
061006 750,360 150,35
0a0f0a 650,400 140,55
1f4a20 480,300 70,70
`, 0);
scatter(625, 210, 205, 130, 60, ['#447d30', '#4d8034', '#55883c', '#3f752c'], 3);
scatter(830, 380, 160, 180, 90, ['#153312', '#1d4018', '#26501f', '#0b1a0b'], 2);
paint(`
0d0610 1080,21 1320,21 1270,110 1320,190 1370,260 1360,330 1350,400 1325,480 1285,560 1215,720 780,720 830,590 870,515 930,430 990,340 1040,260 1045,130
130a0e 1130,60 1200,30 1180,140 1140,200
1d161d 1262,115 50,45
1d161d 1295,190 40,35
`, 0);
scatter(1320, 20, 60, 280, 30, ['#10180f', '#15230f', '#0b0d10'], 3);
paint(`
b9a7a0 380,400 525,380 520,520 500,590 400,715 240,715 290,590 330,500
ead8c2 345,560 420,530 450,580 410,715 285,715 330,620
c9e7ea 387,290 16,45
e2f5f3 525,320 14,40
dff0df 370,85 50,28
7e9a74 350,115 60,40
f4efee 415,130 50,40
e5d6c6 450,155 100,40
5c5157 430,178 55,40
8d8588 390,145 60,28
a9b5ac 540,175 20,60
090d09 440,80 100,30
161e2c 560,180 60,130
2e6f2c 500,230 60,35
a69485 430,395 50,70
c7c8ca 500,370 30,60
f5e7a4 445,490 55,40
efd8b5 395,535 50,50
5b4d50 355,505 45,40
201b30 455,540 65,55
393043 400,590 55,40
ead4a9 330,640 30,40
151a20 500,590 75,90
6d9a75 430,660 115,30
d0e3d4 470,680 65,28
102113 520,360 50,230
171728 530,360 24,160
3d2d38 620,500 60,60
b6d1d9 640,545 80,80
c48586 640,525 65,35
5b6670 690,500 28,125
c8d6c6 700,490 115,100
c5ead8 715,550 100,70
bd6961 765,565 40,25
9fb79c 785,490 30,95
2d6627 545,560 60,120
277520 740,600 95,90
468b28 775,620 50,50
5d7158 590,630 160,50
b1aeb4 650,680 140,30
b79c98 585,150 55,40
dcc9b4 610,135 35,60
33322f 640,120 60,35
7c7e9b 685,60 110,80
b7c0d0 690,100 65,55
e3f3ff 745,21 45,38
c6d9f2 735,80 55,70
a97a84 730,75 30,30
b9666b 785,110 20,50
9fb7e5 720,145 60,18
9099ad 645,240 125,70
c1dce5 710,260 70,45
fa5863 690,178 110,65
ff6d72 675,205 110,30
d2585c 770,190 35,60
923d3e 870,180 60,30
7a6871 835,215 12,35
132017 800,250 90,110
c3d59a 630,330 60,30
e8e4a9 660,320 60,40
dbe3a8 700,320 30,50
a6c8b6 775,330 40,30
f5f3c0 670,355 110,35
4d75a6 690,430 38,18
dadcc0 725,420 45,30
c1b9a0 590,460 40,45
e5b8bf 620,460 40,30
1b2810 800,360 90,120
554625 820,380 890,430 900,500 850,470
5c5b3a 830,500 970,540 970,690 880,650 810,590
6c7036 860,520 65,30
685b32 900,550 60,70
d74f3c 895,262 960,262 970,300 970,500 950,490 945,390 910,330
fb6146 905,290 50,45
f08467 945,390 25,100
eeb17f 955,490 15,30
181e12 800,680 120,30
705c66 860,90 15,50
`, 975);
scatter(1345, 480, 130, 60, 14, ['#c8b8a8', '#d8c7b0', '#8e858a', '#a39a92'], 1);
scatter(1290, 560, 110, 150, 40, ['#fffaf0', '#d8c7b0', '#b0a49c', '#fff', '#8e858a'], 2);

// Soften neighbouring cells, leaving them visibly stepped.
function grain(amount) {
  const img = ctx.getImageData(0, 0, 140, 52), d = img.data, src = new Uint8ClampedArray(d);
  for (let y = 0; y < 52; y++) for (let x = 0; x < 140; x++) {
    const i = (y * 140 + x) * 4, k = 1 - amount + rnd() * amount * 2;
    for (let j = 0; j < 3; j++) {
      const l = src[i + j - (x ? 4 : 0)], r = src[i + j + (x < 139 ? 4 : 0)];
      const u = src[i + j - (y ? 560 : 0)], b = src[i + j + (y < 51 ? 560 : 0)];
      d[i + j] = (src[i + j] * .6 + (l + r + u + b) * .1) * k + rnd() * 5 - 1;
    }
  }
  ctx.putImageData(img, 0, 0);
}
grain(.17);
paint(`
ffffff 485,540 85,32
ffffff 500,515 55,65
9cb4ee 500,505 50,12
`, 0);
paint(`
ffffff 415,262 85,110
ffffff 400,275 125,84
ffffff 430,262 55,127
ffffff 475,200 80,30
ffffff 430,130 25,35
ffffff 690,365 85,55
ffffff 340,590 30,70
ffffff 365,625 30,60
`, 975);
```
